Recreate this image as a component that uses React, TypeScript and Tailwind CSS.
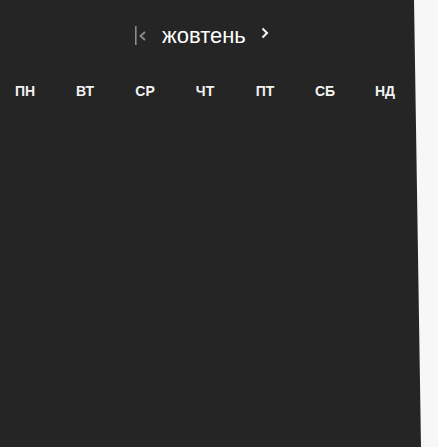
import React from 'react';

const days = ['пн', 'вт', 'ср', 'чт', 'пт', 'сб', 'нд'];

function FirstIcon() {
  return (
    <svg width="12" height="20" viewBox="0 0 12 20" className="block">
      <rect x="0" y="0" width="1.6" height="19" fill="#8a8a8a" />
      <path d="M10 6 L5.5 10 L10 14" fill="none" stroke="#8a8a8a" strokeWidth="1.8" />
    </svg>
  );
}

function NextIcon() {
  return (
    <svg width="8" height="12" viewBox="0 0 8 12" className="block">
      <path d="M1.5 1.5 L6 6 L1.5 10.5" fill="none" stroke="#ffffff" strokeWidth="2" />
    </svg>
  );
}

export default function App() {
  return (
    <div className="w-[438px] h-[447px] bg-[#f7f7f7] overflow-hidden font-['Liberation_Sans',Arial,sans-serif]">
      <div className="h-full w-[422px] bg-[#252525] [clip-path:polygon(0_0,414px_0,421px_100%,0_100%)]">
        <header className="flex items-center pt-[26px] pl-[135px]">
          <FirstIcon />
          <span className="ml-[15px] text-[22px] leading-[20px] text-white">жовтень</span>
          <span className="ml-[15px] -mt-[6px]">
            <NextIcon />
          </span>
        </header>
        <div className="grid grid-cols-[repeat(7,60px)] -ml-[5px] mt-[38px]">
          {days.map((d) => (
            <div key={d} className="text-center text-[14px] font-bold uppercase leading-[14px] text-[#f2f2f2]">
              {d}
            </div>
          ))}
        </div>
      </div>
    </div>
  );
}
